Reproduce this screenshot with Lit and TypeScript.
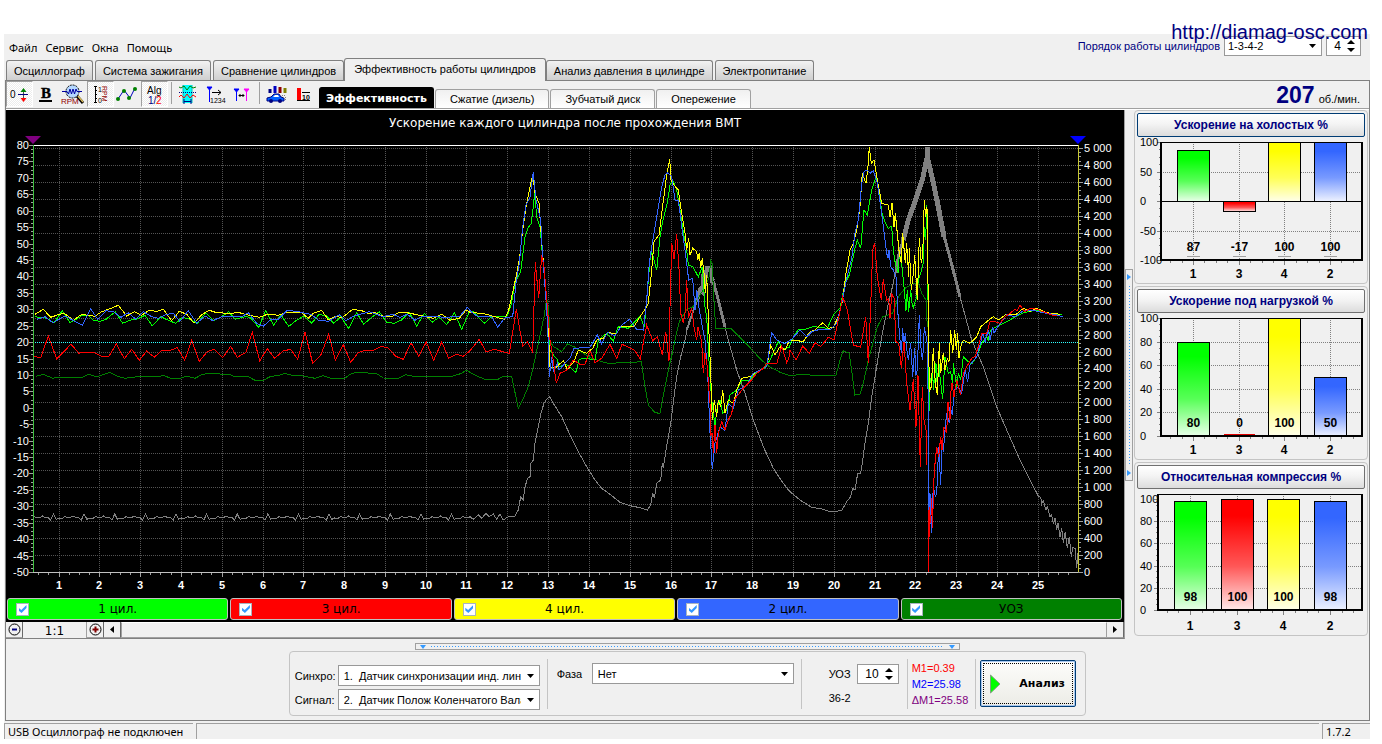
import { LitElement, html, svg, css } from "lit";
import { customElement, property, state } from "lit/decorators.js";
import { classMap } from "lit/directives/class-map.js";
import { styleMap } from "lit/directives/style-map.js";

/* ---------- oscillogram data ---------- */

interface Chunk {
  x: number;
  y: number;
  pts: string;
}

interface Trace {
  color: string;
  width: number;
  chunks: Chunk[];
}

/* Samples are stored in thirds of a chart unit, relative to the start of each recorded chunk. */
const A = { x: 0, y: 280 };
const B = { x: 470, y: 140 };
const C = { x: 790, y: 140 };

function idleRpm(): string {
  const wave = [0, 14, 3, 0, 8, -2, 10, 2, -4, 2, -6, 4, 12, -7, 3, 0, 10, -3, 6, 0, 12, -2, 4, -8, 8, 10];
  const out: string[] = [];
  for (let i = 0; i < 157; i++) {
    out.push(`${102 + i * 8.35},${710 + wave[(i * 7 + ((i / 11) | 0)) % wave.length]}`);
  }
  return out.join(" ");
}

const traces: Trace[] = [
  {
    color: "#808080",
    width: 1,
    chunks: [
      { ...A, pts: idleRpm() },
      { ...B, pts: "0,1130 10,1138 25,1125 35,1135 48,1120 58,1130 70,1122 80,1138 90,1122 100,1140 115,1130 135,1128 145,1110 152,1070 160,1080 165,1040 173,1015 180,1010 183,970 190,960 195,910 205,860 213,820 222,790 232,775 240,770 250,790 275,830 300,885 325,935 350,980 375,1020 395,1045 425,1067 450,1087 480,1097 510,1103 532,1110 542,1095 548,1060 553,1075 560,1030 572,1020 577,970 580,985 588,930 597,880 602,850 612,770 622,700 632,650 645,600 655,550 670,510 685,470 700,410 715,380 735,430 750,500 765,560 775,600 800,690 825,760 850,840 880,920 910,985 940,1030 958,1053" },
      { ...C, pts: "0,1055 30,1080 65,1102 100,1108 120,1115 155,1112 170,1085 182,1070 188,1045 195,1050 203,1000 212,1000 218,960 225,910 235,850 245,770 255,710 265,650 275,590 285,540 295,490 305,450 330,330 350,250 375,180 400,100 412,20 425,100 445,190 465,290 485,380 510,470 545,600 580,680 620,800 650,870 690,960 725,1030 745,1068 752,1072 755,1092 760,1082 768,1110 772,1100 780,1130 785,1125 790,1152 795,1135 800,1170 804,1150 810,1190 815,1165 820,1208 826,1175 832,1225 838,1190 844,1252 848,1222 855,1225 860,1285 863,1240" },
    ],
  },
  { color: "#808080", width: 2, chunks: [{ ...B, pts: "650,570 670,512 685,470" }] },
  { color: "#808080", width: 4, chunks: [{ ...B, pts: "682,478 690,450 696,455 700,410 706,420 710,385 720,385 726,420 732,415" }] },
  { color: "#808080", width: 3, chunks: [{ ...B, pts: "730,425 745,480 765,560" }] },
  { color: "#808080", width: 3, chunks: [{ ...C, pts: "318,400 325,350 345,280" }] },
  { color: "#808080", width: 3, chunks: [{ ...C, pts: "460,280 478,345 510,470" }] },
  { color: "#808080", width: 5, chunks: [{ ...C, pts: "340,300 355,240 375,185 398,115 412,50 412,20 414,60 428,120 445,200 462,290" }] },
  {
    color: "#008000",
    width: 1,
    chunks: [
      { ...A, pts: "108,289 130,283 158,295 175,292 248,292 265,283 290,290 330,277 352,289 375,295 420,289 475,290 490,286 512,295 540,295 560,289 585,295 605,284 628,280 690,284 700,289 745,290 765,301 790,301 812,289 835,287 855,280 875,286 905,287 945,295 968,287 990,294 1035,294 1055,280 1080,277 1130,281 1150,294 1195,295 1218,284 1240,289 1285,291 1360,288 1385,280 1398,271 1408,275" },
      { ...B, pts: "0,697 20,708 45,718 80,720 97,710 125,710 145,805 160,775 175,740 190,680 205,610 222,530 230,475 236,510 240,600 248,618 275,635 293,611 315,622 340,640 365,655 395,665 425,672 445,667 490,668 514,664 525,740 535,795 555,818 570,820 585,740 597,680 607,640 617,590 628,545 650,508 670,500 690,465 705,440 718,410 722,362 727,370 730,450 737,565 785,567 800,583 830,612 860,645 890,675 930,697 958,706" },
      { ...C, pts: "0,706 40,704 80,706 138,706 150,660 160,632 178,640 186,700 194,765 210,762 220,730 235,660 250,605 262,560 278,530 308,520 325,470 345,445 370,430 385,430 395,460 408,480 412,560" },
    ],
  },
  {
    color: "#00ff00",
    width: 1,
    chunks: [
      { ...A, pts: "105,110 140,115 163,128 187,92 210,128 232,116 248,105 265,105 280,121 300,124 318,118 346,95 368,130 392,120 410,118 435,106 457,138 482,110 503,120 527,130 548,112 570,118 592,130 617,98 640,122 662,112 686,95 706,118 735,110 750,112 776,142 797,92 821,136 842,104 866,139 888,122 912,108 935,130 957,103 980,108 1001,130 1023,110 1046,146 1070,98 1091,133 1115,112 1138,95 1160,127 1182,130 1205,120 1228,97 1250,139 1273,100 1296,127 1318,112 1340,134 1363,98 1385,148 1408,95" },
      { ...B, pts: "10,515 43,550 65,530 110,530 122,500 135,430 152,395 165,290 175,262 184,250 190,200 194,158 200,230 210,260 217,340 225,420 232,500 240,630 250,645 262,658 268,680 285,672 300,680 317,698 328,658 350,655 375,660 385,600 410,580 430,603 445,560 475,565 510,530 523,560 530,480 540,360 545,335 560,390 570,290 580,235 592,190 600,135 608,120 620,150 630,210 640,275 650,330 655,375 668,380 685,410 697,380 705,500 710,530 718,680 725,780 735,855 742,800 750,780 758,820 770,810 780,765 800,750 815,720 840,720 860,695 885,685 900,660 925,605 940,628 958,622" },
      { ...C, pts: "5,600 25,568 40,570 70,560 90,562 112,565 130,525 150,505 165,430 178,405 195,325 202,300 212,325 222,210 232,225 245,150 258,110 268,160 275,215 285,245 295,265 305,258 310,330 316,370 325,400 328,340 335,370 342,440 348,512 352,450 356,515 362,450 366,490 370,505 375,485 380,470 385,420 392,400 400,370 403,260 407,300 410,195 414,480 416,840 420,730 428,690 430,750 435,700 438,670 442,740 446,660 450,710 458,778 465,650 475,700 482,695 488,735 490,670 500,740 505,700 512,720 520,650 535,665 545,672 560,650 575,610 590,590 595,600 600,575 610,565 630,555 650,545 680,528 700,518 740,510 770,520 815,525" },
    ],
  },
  {
    color: "#ffff00",
    width: 1,
    chunks: [
      { ...A, pts: "105,103 130,88 152,112 175,104 193,100 220,121 245,103 285,109 305,95 330,86 355,76 380,108 403,95 425,106 447,91 470,94 490,88 515,122 538,94 560,103 582,130 605,104 628,91 650,98 685,100 718,98 740,104 778,112 805,102 835,106 858,98 905,98 925,115 940,100 965,91 985,120 1005,110 1028,112 1058,88 1085,92 1105,100 1125,98 1150,109 1180,108 1195,98 1215,97 1245,103 1300,115 1325,103 1350,121 1378,115 1398,90 1410,97" },
      { ...B, pts: "12,518 45,522 80,532 103,538 115,515 125,470 137,415 148,360 158,270 168,200 180,140 188,105 195,160 207,190 217,330 226,430 233,530 240,680 255,685 280,662 292,688 312,665 325,630 350,640 368,625 380,600 400,595 412,577 440,582 450,560 475,560 492,560 510,530 527,505 535,490 545,390 552,305 567,285 575,220 590,105 599,58 603,120 612,135 625,150 635,220 645,280 650,330 656,295 660,345 668,325 680,335 683,360 688,340 692,385 697,355 702,400 706,460 710,405 716,560 722,700 727,840 733,780 740,830 745,780 752,800 758,750 765,820 775,780 790,790 800,750 815,715 840,710 860,695 890,680 902,615 915,645 930,620 945,630 958,602" },
      { ...C, pts: "12,600 40,605 60,575 75,570 98,548 115,565 130,562 145,530 158,480 168,400 180,330 190,310 200,270 210,200 217,100 228,130 234,80 238,22 244,70 252,60 262,120 275,190 295,195 300,230 306,190 312,260 316,220 322,280 328,340 334,370 338,280 346,370 350,310 356,410 358,325 364,450 370,400 374,345 382,480 388,295 394,370 398,345 403,180 407,230 411,200 415,500 418,755 424,740 430,625 436,730 442,765 448,610 452,700 460,640 465,690 472,655 477,665 482,570 488,640 494,570 499,630 503,580 507,655 512,620 520,600 540,610 560,590 572,560 590,545 610,530 625,540 650,522 680,522 700,505 720,515 740,505 770,518 810,523" },
    ],
  },
  {
    color: "#3366ff",
    width: 1,
    chunks: [
      { ...A, pts: "110,118 135,110 158,128 195,108 247,136 272,86 293,118 318,92 340,95 363,112 385,98 408,118 430,95 455,110 475,115 500,103 520,100 540,124 565,92 590,130 615,108 638,122 665,110 725,110 745,98 770,130 790,139 812,118 835,118 862,91 895,95 935,104 955,120 985,124 1018,104 1038,122 1062,108 1108,95 1150,110 1178,103 1200,112 1222,103 1245,121 1268,108 1340,112 1380,108 1402,82 1409,90" },
      { ...B, pts: "0,512 20,528 65,530 83,562 105,533 128,530 138,430 148,370 158,260 168,195 180,170 190,97 198,180 212,240 217,330 228,480 233,560 238,712 245,650 250,695 262,670 267,690 285,670 300,655 312,625 360,622 382,585 395,612 412,577 435,588 455,555 478,538 500,568 520,570 530,480 538,370 545,320 560,230 575,140 585,105 592,98 605,110 615,180 625,180 635,260 645,330 656,420 668,415 675,510 680,450 688,510 695,550 705,600 713,700 720,880 727,988 735,910 750,860 765,872 775,790 790,805 805,750 830,735 850,700 890,680 905,578 920,600 945,612 958,602" },
      { ...C, pts: "5,598 30,570 50,590 65,575 90,568 120,570 140,550 155,490 170,415 185,355 195,280 205,240 215,130 222,95 230,90 240,100 250,92 262,130 275,220 290,340 294,355 297,330 302,380 310,390 318,410 325,540 330,600 334,640 338,565 342,620 346,580 350,625 355,660 362,610 368,710 374,625 378,705 382,690 388,525 394,640 398,660 403,560 410,600 413,620 415,860 417,1110 420,1060 424,1178 430,1040 436,1070 440,1060 446,920 452,1035 456,900 460,935 465,870 470,820 478,850 480,800 487,825 493,750 505,740 515,760 525,690 533,725 540,675 560,650 570,615 578,580 585,605 595,570 600,600 608,560 612,580 620,565 635,545 650,525 675,530 700,512 725,510 760,518 800,525 818,530" },
    ],
  },
  {
    color: "#ff0000",
    width: 1,
    chunks: [
      { ...A, pts: "102,229 122,233 145,168 170,236 213,193 237,220 250,217 280,217 305,229 327,229 349,192 373,236 395,208 418,241 440,213 463,232 485,211 510,211 532,203 554,241 575,181 598,244 622,215 643,208 668,233 692,199 712,232 738,217 757,156 779,243 802,206 824,235 849,213 872,208 893,238 915,157 938,250 963,224 986,163 1006,241 1030,194 1052,247 1075,218 1095,211 1120,211 1143,199 1165,204 1187,229 1210,238 1233,188 1256,229 1279,186 1301,241 1325,186 1346,235 1370,223 1390,229 1408,214" },
      { ...B, pts: "0,632 28,598 48,636 72,628 118,640 139,508 158,618 172,605 188,636 192,500 196,367 206,475 215,345 222,380 232,500 240,600 247,640 259,730 270,700 290,690 310,660 330,673 345,673 360,632 375,668 395,655 420,613 440,655 456,613 493,630 511,657 530,555 548,602 562,590 577,645 587,575 597,662 600,500 605,310 612,358 620,282 628,400 632,520 640,548 645,520 650,420 655,535 665,505 672,560 680,600 684,560 695,605 700,700 705,640 712,680 716,740 720,790 722,885 726,880 730,938 735,855 740,940 745,880 755,845 765,870 775,840 785,820 792,780 800,770 820,745 840,725 860,700 880,685 890,670 920,672 935,618 950,668 958,650" },
      { ...C, pts: "0,630 18,660 38,618 58,640 75,608 92,620 115,592 132,600 145,540 158,470 172,510 190,615 212,622 227,530 235,668 242,500 248,330 254,308 262,410 274,480 280,418 290,480 296,475 300,535 305,462 312,475 318,605 326,610 334,683 342,605 350,730 360,810 370,718 378,860 384,705 391,980 397,740 402,840 408,870 411,975" },
    ],
  },
  {
    color: "#ff0000",
    width: 1,
    chunks: [{ ...C, pts: "416,1110 416,1296 418,1100 422,1150 425,1075 428,1165 430,1050 434,980 440,920 446,950 452,890 456,930 462,860 470,880 474,785 480,840 482,760 486,730 492,770 500,720 512,765 520,700 530,680 545,655 555,650 565,620 575,580 590,580 600,545 615,545 630,550 645,530 660,520 675,508 682,512 690,495 705,515 720,505 740,508 760,515 785,525 800,525" }],
  },
];

function toPoints(chunks: Chunk[]): string {
  return chunks
    .flatMap((c) =>
      c.pts.split(" ").map((p) => {
        const [x, y] = p.split(",").map(Number);
        return `${(c.x + x / 3).toFixed(1)},${(c.y + y / 3).toFixed(1)}`;
      })
    )
    .join(" ");
}

const range = (from: number, to: number, step: number): number[] => {
  const out: number[] = [];
  for (let v = from; v <= to + step / 1000; v += step) out.push(v);
  return out;
};

const thousands = (v: number) => (v >= 1000 ? `${Math.floor(v / 1000)} ${String(v % 1000).padStart(3, "0")}` : String(v));

/* ---------- main oscillogram ---------- */

@customElement("acceleration-chart")
export class AccelerationChart extends LitElement {
  static styles = css`
    :host {
      display: block;
      background: #000;
    }
    .plot {
      display: block;
      width: 100%;
      height: auto;
    }
    .title {
      font: 12px "DejaVu Sans", sans-serif;
      fill: #fff;
      text-anchor: middle;
    }
    .axis {
      font: 11px "Liberation Sans", Arial, sans-serif;
      fill: #fff;
    }
    .left {
      text-anchor: end;
    }
    .bottom {
      font-weight: bold;
      text-anchor: middle;
    }
    .crisp {
      shape-rendering: crispEdges;
      fill: none;
    }
  `;

  render() {
    const left = 33;
    const right = 1078;
    const top = 145;
    const bottom = 572;
    const xAt = (n: number) => Math.round(17.7 + 40.8 * n);
    const yAt = (v: number) => Math.round(bottom - ((v + 50) * (bottom - top)) / 130);
    const rpmAt = (v: number) => Math.round(bottom - (v * 424) / 5000);
    return html`
      <svg class="plot" viewBox="6 110 1118 487" role="img" aria-label="Ускорение каждого цилиндра после прохождения ВМТ">
        <text class="title" x="565" y="127">Ускорение каждого цилиндра после прохождения ВМТ</text>
        <g class="crisp" stroke="#545454" stroke-dasharray="1 1">
          ${range(200, 5000, 200).map((v) => svg`<line x1=${left} x2=${right} y1=${rpmAt(v) + 0.5} y2=${rpmAt(v) + 0.5}></line>`)}
          ${range(1, 25, 1).map((n) => svg`<line x1=${xAt(n) + 0.5} x2=${xAt(n) + 0.5} y1=${top} y2=${bottom}></line>`)}
        </g>
        <line class="crisp" x1=${left} x2=${right} y1="342.5" y2="342.5" stroke="#30ffff" stroke-dasharray="1 1"></line>
        <g class="crisp">
          ${traces.map((t) => svg`<polyline points=${toPoints(t.chunks)} stroke=${t.color} stroke-width=${t.width}></polyline>`)}
        </g>
        <g class="crisp" stroke="#a0a0a0">
          ${range(-50, 80, 1.25).map((v) => svg`<line x1=${v % 5 === 0 ? 29 : 31} x2=${left} y1=${yAt(v) + 0.5} y2=${yAt(v) + 0.5}></line>`)}
          ${range(0, 5000, 50).map((v) => svg`<line x1=${right} x2=${v % 200 === 0 ? 1083 : 1081} y1=${rpmAt(v) + 0.5} y2=${rpmAt(v) + 0.5}></line>`)}
          ${range(0.5, 25.75, 0.25).map((n) => svg`<line x1=${xAt(n) + 0.5} x2=${xAt(n) + 0.5} y1=${bottom} y2=${n % 1 === 0 ? 577 : 575}></line>`)}
        </g>
        <line class="crisp" x1=${left} x2=${right} y1="145.5" y2="145.5" stroke="#fff"></line>
        <line class="crisp" x1=${left} x2=${right} y1="572.5" y2="572.5" stroke="#c0c0c0"></line>
        <line class="crisp" x1="33.5" x2="33.5" y1=${top} y2=${bottom} stroke="#40c040"></line>
        <line class="crisp" x1="1078.5" x2="1078.5" y1=${top} y2=${bottom} stroke="#c8c832"></line>
        <path d="M25 136H41L33 144Z" fill="#800080"></path>
        <path d="M1070 136H1086L1078 144Z" fill="#0000ff"></path>
        ${range(-50, 80, 5).map((v) => svg`<text class="axis left" x="29" y=${yAt(v) + 4}>${v}</text>`)}
        ${range(0, 5000, 200).map((v) => svg`<text class="axis" x="1084" y=${rpmAt(v) + 4}>${thousands(v)}</text>`)}
        ${range(1, 25, 1).map((n) => svg`<text class="axis bottom" x=${xAt(n)} y="589">${n}</text>`)}
      </svg>
    `;
  }
}

/* ---------- side bar charts ---------- */

interface Bar {
  name: string;
  value: number;
  color: string;
}

interface BarSet {
  title: string;
  min: number;
  step: number;
  left: number;
  headroom: number;
  bars: Bar[];
}

@customElement("bar-panel")
export class BarPanel extends LitElement {
  @property({ attribute: false }) data!: BarSet;
  @property({ type: Boolean }) active = false;

  static styles = css`
    :host {
      display: block;
      border: 1px solid #c4c4c4;
      border-radius: 4px;
      padding: 2px;
    }
    .head {
      display: block;
      width: 100%;
      height: 24px;
      padding: 0;
      border: 1px solid #707070;
      border-radius: 2px;
      background: linear-gradient(#fff, #f4f4f4 45%, #dcdcdc);
      color: #000080;
      font: bold 12px "Liberation Sans", Arial, sans-serif;
    }
    .head.active {
      border-color: #003c74;
    }
    .plot {
      display: block;
      width: 100%;
      height: auto;
    }
    .crisp {
      shape-rendering: crispEdges;
      fill: none;
    }
    .scale {
      font: 11px "Liberation Sans", Arial, sans-serif;
    }
    .value,
    .name {
      font: bold 12px "Liberation Sans", Arial, sans-serif;
      text-anchor: middle;
    }
  `;

  render() {
    const { title, min, step, left, headroom, bars } = this.data;
    const top = 5;
    const bottom = headroom ? 121 : 123;
    const right = 225;
    const y100 = top + headroom;
    const yAt = (v: number) => Math.round(bottom - ((v - min) * (bottom - y100)) / (100 - min));
    const pitch = (193 - (left + 32)) / 3;
    const cx = (i: number) => Math.round(left + 32 + pitch * i);
    return html`
      <button class=${classMap({ head: true, active: this.active })}>${title}</button>
      <svg class="plot" viewBox="0 0 228 144" role="img" aria-label=${title}>
        <defs>
          ${bars.map(
            (b, i) => svg`<linearGradient id=${"g" + i} x1="0" y1="0" x2="0" y2="1">
              <stop offset="0.15" stop-color=${b.color}></stop>
              <stop offset="0.6" stop-color=${b.color} stop-opacity="0.66"></stop>
              <stop offset="1" stop-color=${b.color} stop-opacity="0.08"></stop>
            </linearGradient>`
          )}
        </defs>
        <g class="crisp" stroke="#808080" stroke-dasharray="1 1">
          ${range(min + step, 100 - step, step).map((v) => svg`<line x1=${left} x2=${right} y1=${yAt(v) + 0.5} y2=${yAt(v) + 0.5}></line>`)}
          ${bars.map((_, i) => svg`<line x1=${cx(i) + 0.5} x2=${cx(i) + 0.5} y1=${top} y2=${bottom}></line>`)}
        </g>
        <g class="crisp" stroke="#808080">
          ${range(min, 100, step).map((v) => svg`<line x1=${left - 4} x2=${left} y1=${yAt(v) + 0.5} y2=${yAt(v) + 0.5}></line>`)}
          ${range(min, 100, step / 4).map((v) => svg`<line x1=${left - 2} x2=${left} y1=${yAt(v) + 0.5} y2=${yAt(v) + 0.5}></line>`)}
          ${range(-0.5, 3.5, 0.25).map((i) => svg`<line x1=${cx(i) + 0.5} x2=${cx(i) + 0.5} y1=${bottom} y2=${bottom + (i % 1 === 0 ? 5 : 3)}></line>`)}
        </g>
        <line class="crisp" x1=${left} x2=${right} y1=${yAt(0) + 0.5} y2=${yAt(0) + 0.5} stroke="#000"></line>
        ${bars.map((b, i) => {
          const y = Math.min(yAt(b.value), yAt(0));
          const h = Math.abs(yAt(b.value) - yAt(0));
          return h
            ? svg`
              <rect x=${cx(i) - 16} y=${y} width="33" height=${h} fill="#fff"></rect>
              <rect shape-rendering="crispEdges" x=${cx(i) - 15.5} y=${y + 0.5} width="32" height=${h} fill=${`url(#g${i})`} stroke="#000"></rect>`
            : svg`<line class="crisp" x1=${cx(i) - 15} x2=${cx(i) + 16} y1=${y - 1.5} y2=${y - 1.5} stroke="#e00000"></line>`;
        })}
        <path class="crisp" d=${`M${left} ${top + 0.5}H${right}`} stroke="#000"></path>
        <path class="crisp" d=${`M${left} ${top}V${bottom}H${right}V${top}`} stroke="#000" stroke-width="2"></path>
        ${bars.map(
          (b, i) => svg`
            <text class="value" x=${cx(i) + 0.5} y=${bottom - 9}>${b.value}</text>
            <text class="name" x=${cx(i)} y="141">${b.name}</text>
            ${min < 0 ? svg`<line class="crisp" x1=${cx(i) - 6} x2=${cx(i) + 7} y1=${bottom - 3.5} y2=${bottom - 3.5} stroke="#a0a0a0"></line>` : ""}`
        )}
        ${range(min, 100, step).map((v) => svg`<text class="scale" x="3" y=${yAt(v) + 4}>${v}</text>`)}
      </svg>
    `;
  }
}

/* ---------- toolbar icons ---------- */

const icons = {
  zero: svg`<text class="t" x="3" y="16" font-size="10">0</text>
    <path d="M11 12.500H21" stroke="#000080"></path>
    <path d="M16.500 12V9M16.500 13V17" stroke="#505050"></path>
    <path d="M13.500 10H19.500L16.500 6Z" fill="#008000"></path><path d="M13.500 16H19.500L16.500 20Z" fill="#f00"></path>`,
  bold: svg`<text x="12" y="16" text-anchor="middle" font-family="Liberation Serif, serif" font-weight="bold" font-size="15" stroke="#000" stroke-width="0.4">B</text>
    <path d="M5 19H18" stroke="#000" stroke-width="2"></path>`,
  rpm: svg`<path d="M16 14L22 21" stroke="#000" stroke-width="3"></path><path d="M17 14L22 20" stroke="#e0c060" stroke-width="1.4"></path>
    <circle cx="11.500" cy="9.500" r="6.500" fill="#b4d8ff" stroke="#000" stroke-dasharray="2 1"></circle>
    <path d="M1 9.500H6L7.500 12L9 7L10.500 12L12 7L13.500 12L15 7L16 9.500H21" fill="none" stroke="#0000a0"></path>
    <text class="t" x="0" y="22" font-size="8" fill="#900000">RPM</text>`,
  range: svg`<path d="M6 4.500H9M7.500 4.500V20.500M6 20.500H9M7 8.500H9M7 12.500H9M7 16.500H9" stroke="#000" fill="none"></path>
    <text class="t" x="10" y="10" font-size="7">1</text><text class="t" x="10" y="21" font-size="7">0</text>
    <text class="t" transform="translate(14 4)rotate(90)" font-size="7" fill="#900000">RPM</text>`,
  nodes: svg`<path d="M3 17L9 8L15 16L20 6" fill="none" stroke="#0000c0"></path>
    <g fill="#008000"><circle cx="3" cy="17" r="2"></circle><circle cx="9" cy="9" r="2"></circle><circle cx="14" cy="16" r="2"></circle><circle cx="20" cy="7" r="2"></circle></g>`,
  alg: svg`<text class="t" x="5" y="12" font-size="10">Alg</text><text class="t" x="6" y="22" font-size="10" fill="#000080">1/</text><text class="t" x="14" y="22" font-size="10" fill="#f00">2</text>`,
  period: svg`<rect x="7" y="3" width="9" height="18" fill="#0ff"></rect><path d="M7 3V21M16 3V21" stroke="#00c0c0"></path>
    <path d="M3 5L5 6L8 4L11 8L14 4L17 6L20 5" fill="none" stroke="#008000"></path>
    <path d="M3 10.500H20" stroke="#000080" stroke-dasharray="1 1"></path>
    <path d="M3 15L5 13L8 16L11 12L14 16L17 13L20 15" fill="none" stroke="#f00"></path><path d="M8 19.500H15M8 17V22M15 17V22" stroke="#000080"></path>`,
  count: svg`<path d="M4 5H9L6.500 8Z" fill="#00f" stroke="#00f"></path><path d="M6.500 8V20" stroke="#00f"></path>
    <path d="M9 10.500H18M15 8L18 10.500L15 13" fill="none" stroke="#000"></path><text class="t" x="7" y="21" font-size="7">1234</text>`,
  markers: svg`<path d="M4 7H9L6.500 10Z" fill="#00f" stroke="#00f"></path><path d="M6.500 10V19" stroke="#00f"></path>
    <path d="M14 7H19L16.500 10Z" fill="#f0f" stroke="#f0f"></path><path d="M16.500 10V19" stroke="#f0f"></path>
    <path d="M9 13.500H14M10.500 12L9 13.500L10.500 15M12.500 12L14 13.500L12.500 15" fill="none" stroke="#000"></path>`,
  car: svg`<path d="M6 11V7" stroke="#000080" stroke-width="3"></path><path d="M11 11V4" stroke="#0000c0" stroke-width="3"></path><path d="M16 11V5" stroke="#900000" stroke-width="3"></path><path d="M21 11V6" stroke="#808000" stroke-width="3"></path>
    <path d="M3 19V16L7 15L10 12H15L17 15L20 16V19Z" fill="#0060ff" stroke="#000080"></path><path d="M9 15L11 13H14L15 15Z" fill="#fff"></path>
    <circle cx="7" cy="19" r="2" fill="#000080"></circle><circle cx="16" cy="19" r="2" fill="#000080"></circle>
    <path d="M18 13.500H22M19 15.500H23M21 17.500H23" stroke="#808080" stroke-dasharray="1 1"></path>`,
  ten: svg`<rect x="6" y="6" width="4" height="12" fill="#f00"></rect><path d="M6 18.500H19M11 10.500H19" stroke="#000"></path><text class="t" x="11" y="17.500" font-size="7" font-weight="bold">10</text>`,
};

/* ---------- application ---------- */

const cylinders = (values: [number, number, number, number]): Bar[] => {
  const names = ["1", "3", "4", "2"];
  const colors = ["#00ff00", "#ff0000", "#ffff00", "#3366ff"];
  return values.map((value, i) => ({ name: names[i], value, color: colors[i] }));
};

const barSets: BarSet[] = [
  { title: "Ускорение на холостых %", min: -100, step: 50, left: 24, headroom: 0, bars: cylinders([87, -17, 100, 100]) },
  { title: "Ускорение под нагрузкой %", min: 0, step: 20, left: 24, headroom: 0, bars: cylinders([80, 0, 100, 50]) },
  { title: "Относительная компрессия %", min: 0, step: 20, left: 21, headroom: 5, bars: cylinders([98, 100, 100, 98]) },
];

const legend = [
  { label: "1 цил.", color: "#00ff00" },
  { label: "3 цил.", color: "#ff0000" },
  { label: "4 цил.", color: "#ffff00" },
  { label: "2 цил.", color: "#3366ff" },
  { label: "УОЗ", color: "#008000" },
];

@customElement("app-root")
export class AppRoot extends LitElement {
  @state() private tab = 3;
  @state() private mode = 0;

  static styles = css`
    :host {
      display: block;
      position: relative;
      padding: 34px 12px 0 4px;
      background: #fff;
      color: #000;
      font: 11px "Liberation Sans", Arial, sans-serif;
    }
    * {
      box-sizing: border-box;
    }
    button,
    input,
    select {
      font: inherit;
      color: inherit;
      margin: 0;
      border-radius: 0;
    }
    .url {
      position: absolute;
      top: 20px;
      right: 14px;
      z-index: 2;
      color: #000080;
      font-size: 20px;
      line-height: 24px;
      text-decoration: none;
    }
    .frame {
      background: #f0f0f0;
      padding-left: 1px;
    }
    .top {
      display: flex;
      justify-content: space-between;
      height: 24px;
      padding: 2px 9px 0 0;
    }
    .menu {
      display: flex;
      gap: 8px;
      padding-left: 4px;
      font: 11px "Noto Sans", sans-serif;
    }
    .menu button {
      border: 0;
      padding: 0;
      background: none;
    }
    .order {
      display: flex;
      align-items: center;
      gap: 4px;
      height: 20px;
      color: #000080;
    }
    .pick {
      display: grid;
      align-items: center;
      color: #000;
    }
    .pick > * {
      grid-area: 1 / 1;
    }
    .pick select {
      appearance: none;
      width: 100%;
      height: 21px;
      padding: 0 18px 0 5px;
      border: 1px solid #999;
      background: #fff;
    }
    .pick svg {
      justify-self: end;
      margin-right: 6px;
      width: 7px;
      height: 4px;
      pointer-events: none;
    }
    .order .pick {
      width: 98px;
    }
    .order .pick select {
      height: 20px;
      padding-left: 3px;
    }
    .spin {
      display: flex;
      align-items: center;
      height: 20px;
      border: 1px solid #999;
      background: #fff;
      color: #000;
    }
    .spin input {
      appearance: textfield;
      border: 0;
      padding: 0;
      width: 14px;
      text-align: right;
      background: none;
      outline: 0;
      font-size: 12px;
    }
    .col .spin input {
      width: 21px;
    }
    .spin input::-webkit-inner-spin-button {
      display: none;
    }
    .arrows {
      display: flex;
      flex-direction: column;
      gap: 4px;
      padding: 0 5px 0 6px;
    }
    .arrows button,
    .bar button {
      display: flex;
      align-items: center;
      justify-content: center;
      padding: 0;
      border: 0;
      background: none;
    }
    .tabs {
      display: flex;
      align-items: flex-end;
      gap: 2px;
      height: 23px;
      padding-left: 1px;
      border-bottom: 1px solid #808080;
    }
    .tab {
      height: 20px;
      padding: 0 7px;
      border: 1px solid #808080;
      border-bottom: 0;
      border-radius: 3px 3px 0 0;
      background: linear-gradient(#f2f2f2, #cfcfcf);
    }
    .tab.on {
      height: 23px;
      margin: 0 -2px -1px;
      padding: 0 9px 2px;
      background: #f0f0f0;
    }
    .body {
      border: 1px solid #808080;
      border-top: 0;
    }
    .toolbar {
      display: flex;
      align-items: stretch;
      height: 28px;
      border-bottom: 1px solid #a0a0a0;
      box-shadow: 0 1px #fff;
    }
    .tool {
      width: 27px;
      height: 26px;
      padding: 0;
      border: 1px solid transparent;
      background: none;
    }
    .tool.down {
      border-color: #a0a0a0 #fff #fff #a0a0a0;
      background: repeating-conic-gradient(#fff 0 25%, #ececec 0 50%) 0 0 / 2px 2px;
    }
    .tool svg {
      display: block;
      width: 25px;
      height: 24px;
      overflow: visible;
    }
    .tool .t {
      font-family: "Liberation Sans", Arial, sans-serif;
    }
    .rule {
      width: 7px;
      padding: 1px 3px 4px;
      display: flex;
    }
    .rule::before {
      content: "";
      flex: 1;
      background: #a0a0a0;
    }
    .modes {
      display: flex;
      align-items: flex-end;
      gap: 1px;
      padding-left: 2px;
      flex: 1;
    }
    .mode {
      height: 19px;
      padding: 0 14px;
      border: 1px solid #a0a0a0;
      border-bottom: 0;
      border-radius: 3px 3px 0 0;
      background: linear-gradient(#f0f0f0, #fff);
    }
    .mode.on {
      height: 21px;
      padding: 0 6px;
      border-color: #000;
      background: #000;
      color: #fff;
      font: bold 11px "DejaVu Sans", sans-serif;
    }
    .speed {
      display: flex;
      align-items: baseline;
      gap: 4px;
      padding-right: 9px;
      font-size: 11px;
    }
    .speed strong {
      color: #000080;
      font-size: 23px;
      line-height: 28px;
    }
    .work {
      display: flex;
      align-items: flex-start;
      padding: 1px 1px 0 0;
    }
    .scope {
      flex: 1;
      min-width: 0;
      border-right: 1px solid #a0a0a0;
      border-bottom: 1px solid #808080;
      background: #f0f0f0;
    }
    .legend {
      display: flex;
      gap: 2px;
      padding: 1px 2px 2px 1px;
      background: #000;
    }
    .cyl {
      flex: 1;
      display: flex;
      align-items: center;
      height: 22px;
      padding: 0 8px;
      border: 1px solid #c0c0c0;
      border-radius: 3px;
      font: 12px "DejaVu Sans", sans-serif;
    }
    .cyl span {
      flex: 1;
      text-align: center;
      padding-right: 13px;
    }
    .cyl input {
      appearance: none;
      display: grid;
      place-items: center;
      width: 13px;
      height: 13px;
      border: 1px solid #a8b4c0;
      background: #fff;
    }
    .cyl input:checked::before {
      content: "";
      width: 8px;
      height: 8px;
      background: #3399ff;
      clip-path: polygon(0 35%, 35% 62%, 100% 0, 100% 36%, 38% 100%, 0 70%);
    }
    .bar {
      display: flex;
      height: 16px;
    }
    .bar button {
      width: 17px;
      border-right: 1px solid #696969;
      border-bottom: 1px solid #a0a0a0;
      background: #f0f0f0;
    }
    .zoom {
      width: 64px;
      border-right: 1px solid #a0a0a0;
      text-align: center;
      font: 12px/18px "DejaVu Sans", sans-serif;
    }
    .track {
      flex: 1;
      border: 1px solid #a0a0a0;
      border-top-color: #fff;
    }
    .split {
      display: flex;
      align-items: center;
      justify-content: space-between;
      border: 1px solid #a0a0a0;
    }
    .split i {
      flex: 1;
    }
    .split svg {
      flex: none;
      fill: #3399ff;
    }
    .split.v {
      flex-direction: column;
      align-self: center;
      width: 8px;
      height: 212px;
      margin-right: 1px;
      padding: 4px 0;
    }
    .split.v i {
      width: 1px;
      margin: 6px 0;
      background: repeating-linear-gradient(#3399ff 0 1px, transparent 1px 3px);
    }
    .split.h {
      width: 40%;
      height: 7px;
      margin: 4px auto 1px;
      padding: 0 4px;
    }
    .split.h i {
      height: 1px;
      margin: 0 5px;
      background: repeating-linear-gradient(90deg, #3399ff 0 1px, transparent 1px 3px);
    }
    .side {
      width: 234px;
      display: grid;
      gap: 2px;
    }
    .settings {
      display: flex;
      width: fit-content;
      height: 65px;
      margin: 0 auto 4px;
      padding: 7px 9px 0 5px;
      border: 1px solid #c4c4c4;
      border-radius: 4px;
    }
    .col {
      display: grid;
      align-content: start;
      gap: 3px;
      padding: 6px 7px 0 0;
    }
    .field {
      display: flex;
      align-items: center;
      height: 21px;
    }
    .field label {
      width: 43px;
    }
    .field .pick {
      width: 202px;
    }
    .col.mid,
    .col.adv,
    .col.marks {
      padding: 4px 7px 0 9px;
      border-left: 1px solid #c4c4c4;
      height: 50px;
    }
    .col.mid label {
      width: 35px;
    }
    .col.adv {
      padding: 4px 8px 0 27px;
    }
    .col.adv label {
      width: 28px;
    }
    .col.marks {
      padding: 1px 7px 0 4px;
      gap: 0;
      line-height: 16px;
    }
    .red {
      color: #f00;
    }
    .blue {
      color: #00f;
    }
    .purple {
      color: #800080;
    }
    .go {
      display: flex;
      border-left: 1px solid #c4c4c4;
      height: 50px;
      padding: 1px 0 0 4px;
    }
    .analyze {
      display: flex;
      align-items: center;
      gap: 18px;
      width: 96px;
      height: 47px;
      padding: 0 9px;
      border: 1px solid #003c74;
      border-radius: 2px;
      background: linear-gradient(#fdfdfb, #ecece6);
      box-shadow: inset 0 0 0 1px #a8c8f0;
      outline: 1px dotted #000;
      outline-offset: -4px;
      font: bold 11px "DejaVu Sans", sans-serif;
    }
    .status {
      display: flex;
      gap: 3px;
      margin-left: -1px;
      padding-top: 2px;
      font: 11px/15px "Noto Sans", sans-serif;
    }
    .status span {
      height: 16px;
      padding-left: 3px;
      border-top: 1px solid #a0a0a0;
      border-left: 1px solid #a0a0a0;
    }
    .status span:nth-child(1) {
      width: 189px;
    }
    .status span:nth-child(2) {
      flex: 1;
    }
    .status span:nth-child(3) {
      width: 48px;
    }
  `;

  private caret() {
    return html`<svg viewBox="0 0 7 4" aria-hidden="true"><path d="M0 0H7L3.500 4Z"></path></svg>`;
  }

  private arrows() {
    return html`<span class="arrows">
      <button aria-label="Больше"><svg width="8" height="4" viewBox="0 0 8 4"><path d="M0 4H8L4 0Z"></path></svg></button>
      <button aria-label="Меньше"><svg width="8" height="4" viewBox="0 0 8 4"><path d="M0 0H8L4 4Z"></path></svg></button>
    </span>`;
  }

  private tool(icon: unknown, label: string, down = false) {
    return html`<button class=${classMap({ tool: true, down })} aria-label=${label}>
      <svg viewBox="0 0 25 24" aria-hidden="true">${icon}</svg>
    </button>`;
  }

  render() {
    const tabs = [
      "Осциллограф",
      "Система зажигания",
      "Сравнение цилиндров",
      "Эффективность работы цилиндров",
      "Анализ давления в цилиндре",
      "Электропитание",
    ];
    const modes = ["Эффективность", "Сжатие (дизель)", "Зубчатый диск", "Опережение"];
    return html`
      <a class="url" href="http://diamag-osc.com">http://diamag-osc.com</a>
      <div class="frame">
        <header class="top">
          <nav class="menu">${["Файл", "Сервис", "Окна", "Помощь"].map((m) => html`<button>${m}</button>`)}</nav>
          <div class="order">
            <label for="order">Порядок работы цилиндров</label>
            <span class="pick">
              <select id="order"><option>1-3-4-2</option></select>
              ${this.caret()}
            </span>
            <span class="spin">
              <input type="number" value="4" aria-label="Число цилиндров" />
              ${this.arrows()}
            </span>
          </div>
        </header>
        <div class="tabs" role="tablist">
          ${tabs.map(
            (t, i) => html`<button role="tab" class=${classMap({ tab: true, on: i === this.tab })} aria-selected=${i === this.tab} @click=${() => (this.tab = i)}>${t}</button>`
          )}
        </div>
        <main class="body">
          <div class="toolbar">
            ${this.tool(icons.zero, "Ноль", true)} ${this.tool(icons.bold, "Жирные линии")} ${this.tool(icons.rpm, "Обороты")}
            ${this.tool(icons.range, "Шкала оборотов", true)} ${this.tool(icons.nodes, "Точки")} ${this.tool(icons.alg, "Алгоритм", true)}
            <span class="rule"></span>
            ${this.tool(icons.period, "Период")} ${this.tool(icons.count, "Нумерация")} ${this.tool(icons.markers, "Маркеры")}
            <span class="rule"></span>
            ${this.tool(icons.car, "Автомобиль")} ${this.tool(icons.ten, "Уровень")}
            <div class="modes" role="tablist">
              ${modes.map(
                (m, i) => html`<button role="tab" class=${classMap({ mode: true, on: i === this.mode })} aria-selected=${i === this.mode} @click=${() => (this.mode = i)}>${m}</button>`
              )}
            </div>
            <div class="speed"><strong>207</strong><span>об./мин.</span></div>
          </div>
          <div class="work">
            <section class="scope">
              <acceleration-chart></acceleration-chart>
              <div class="legend">
                ${legend.map(
                  (c) => html`<label class="cyl" style=${styleMap({ background: c.color })}><input type="checkbox" checked /><span>${c.label}</span></label>`
                )}
              </div>
              <div class="bar">
                <button aria-label="Уменьшить"><svg width="13" height="13" viewBox="0 0 13 13"><circle cx="6.500" cy="6.500" r="5.500" fill="none" stroke="#000"></circle><path d="M4 6.500H9" stroke="#000080" stroke-width="2"></path></svg></button>
                <span class="zoom">1:1</span>
                <button aria-label="Увеличить"><svg width="13" height="13" viewBox="0 0 13 13"><circle cx="6.500" cy="6.500" r="5.500" fill="none" stroke="#000"></circle><path d="M3.500 6.500H9.500M6.500 3.500V9.500" stroke="#800000" stroke-width="2"></path></svg></button>
                <button aria-label="Влево"><svg width="4" height="7" viewBox="0 0 4 7"><path d="M4 0V7L0 3.500Z"></path></svg></button>
                <span class="track"></span>
                <button aria-label="Вправо"><svg width="4" height="7" viewBox="0 0 4 7"><path d="M0 0V7L4 3.500Z"></path></svg></button>
              </div>
            </section>
            <div class="split v" role="separator">
              <svg width="4" height="6" viewBox="0 0 4 6"><path d="M0 0V6L4 3Z"></path></svg><i></i><svg width="4" height="6" viewBox="0 0 4 6"><path d="M0 0V6L4 3Z"></path></svg>
            </div>
            <aside class="side">${barSets.map((b, i) => html`<bar-panel .data=${b} ?active=${i === 0}></bar-panel>`)}</aside>
          </div>
          <div class="split h" role="separator">
            <svg width="6" height="4" viewBox="0 0 6 4"><path d="M0 0H6L3 4Z"></path></svg><i></i><svg width="6" height="4" viewBox="0 0 6 4"><path d="M0 0H6L3 4Z"></path></svg>
          </div>
          <section class="settings">
            <div class="col">
              <div class="field">
                <label for="sync">Синхро:</label>
                <span class="pick"><select id="sync"><option>1.\u00a0 Датчик синхронизации инд. линейный</option></select>${this.caret()}</span>
              </div>
              <div class="field">
                <label for="signal">Сигнал:</label>
                <span class="pick"><select id="signal"><option>2.\u00a0 Датчик Полож Коленчатого Вала</option></select>${this.caret()}</span>
              </div>
            </div>
            <div class="col mid">
              <div class="field">
                <label for="phase">Фаза</label>
                <span class="pick"><select id="phase"><option>Нет</option></select>${this.caret()}</span>
              </div>
            </div>
            <div class="col adv">
              <div class="field">
                <label for="uoz">УОЗ</label>
                <span class="spin"><input id="uoz" type="number" value="10" />${this.arrows()}</span>
              </div>
              <div class="field">36-2</div>
            </div>
            <div class="col marks">
              <span class="red">M1=0.39</span>
              <span class="blue">M2=25.98</span>
              <span class="purple">ΔM1=25.58</span>
            </div>
            <div class="go">
              <button class="analyze">
                <svg width="11" height="20" viewBox="0 0 11 20" aria-hidden="true"><path d="M0.500 1V19L10 10Z" fill="#00ff00" stroke="#80a080"></path></svg>
                Анализ
              </button>
            </div>
          </section>
        </main>
        <footer class="status"><span>USB Осциллограф не подключен</span><span></span><span>1.7.2</span></footer>
      </div>
    `;
  }
}
